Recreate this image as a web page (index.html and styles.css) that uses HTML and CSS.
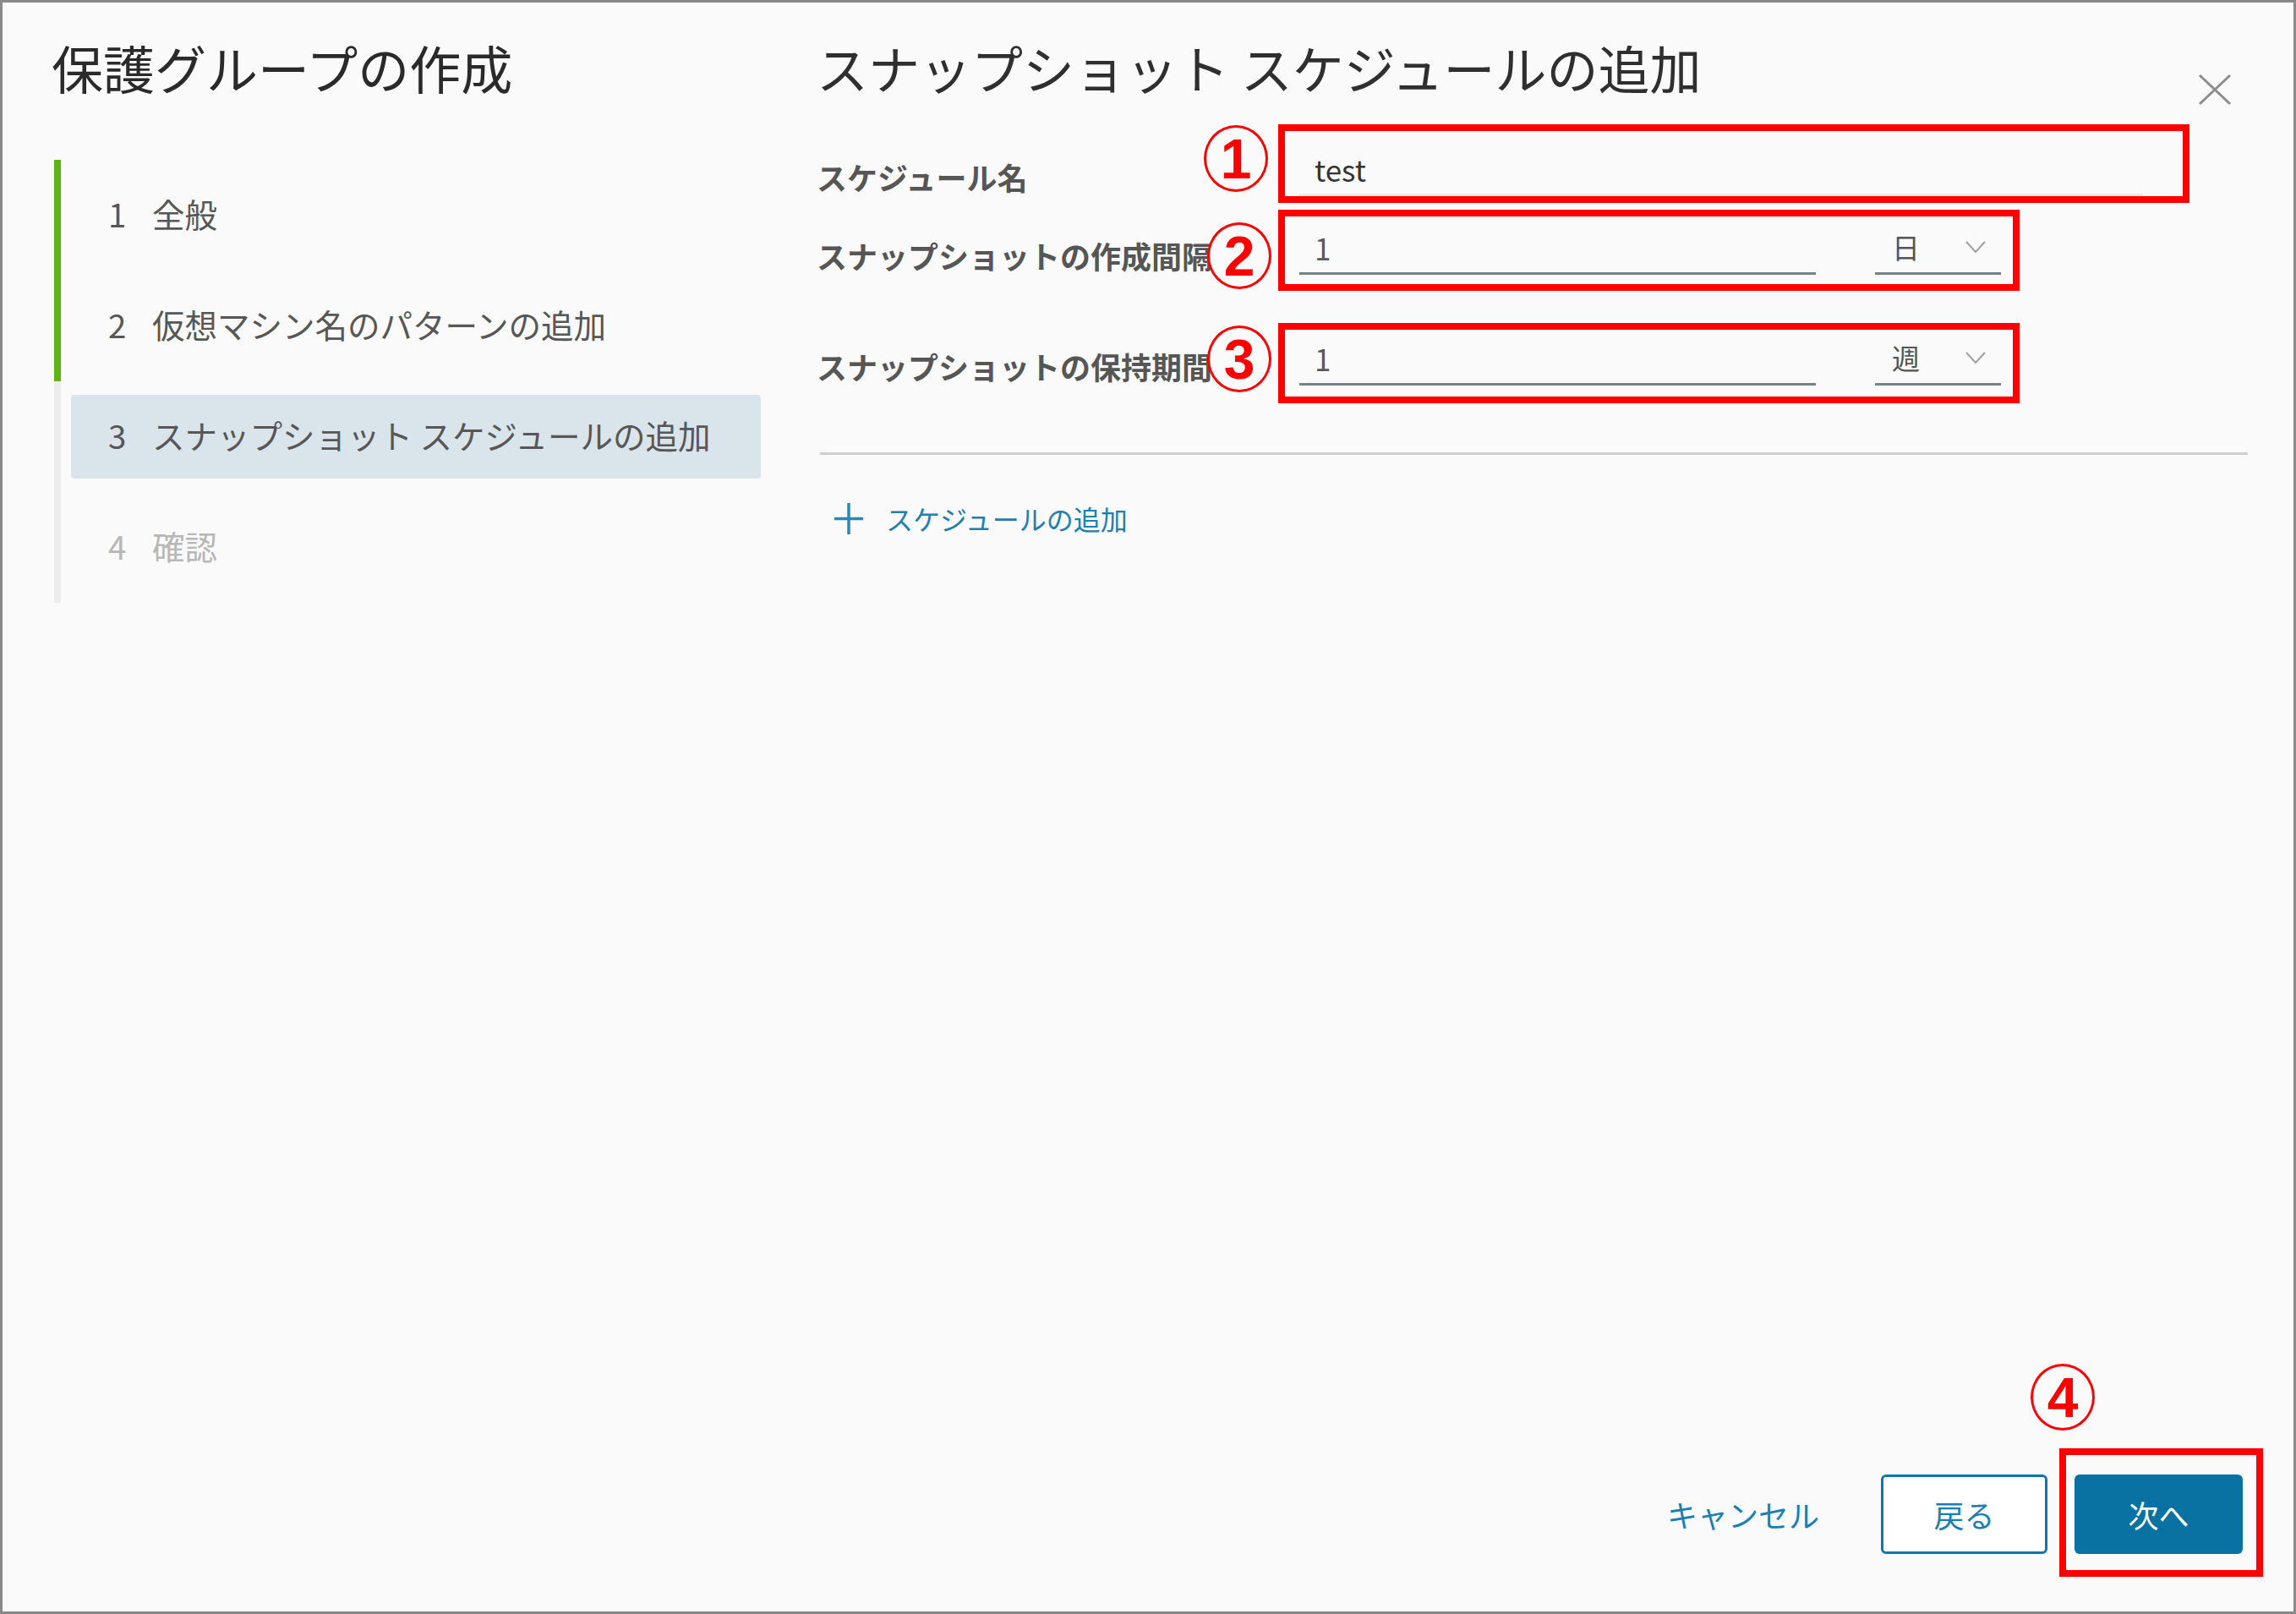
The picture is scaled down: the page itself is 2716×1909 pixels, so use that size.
FILE: index.html
```html
<!DOCTYPE html>
<html lang="ja">
<head>
    <meta charset="UTF-8">
    <title>保護グループの作成</title>
    <link rel="stylesheet" href="styles.css">
</head>
<body>
    <div class="dialog">
        <aside class="wizard-nav">
            <h1 class="wizard-title">保護グループの作成</h1>
            <ol class="steps">
                <li class="step done"><div class="step-label"><span class="step-num">1</span>全般</div></li>
                <li class="step done"><div class="step-label"><span class="step-num">2</span>仮想マシン名のパターンの追加</div></li>
                <li class="step active"><div class="step-label"><span class="step-num">3</span>スナップショット スケジュールの追加</div></li>
                <li class="step todo"><div class="step-label"><span class="step-num">4</span>確認</div></li>
            </ol>
        </aside>

        <section class="wizard-page">
            <header class="page-head">
                <h2 class="page-title">スナップショット スケジュールの追加</h2>
                <button class="close-btn" aria-label="閉じる">
                    <svg width="40" height="38" viewBox="0 0 40 38">
                        <path d="M2 2 L38 36 M38 2 L2 36" stroke="#8c8c8c" stroke-width="3" fill="none"/>
                    </svg>
                </button>
            </header>

            <form class="schedule">
                <div class="form-row">
                    <label class="form-label">スケジュール名</label>
                    <input class="field-input wide" type="text" value="test">
                </div>
                <div class="form-row">
                    <label class="form-label">スナップショットの作成間隔</label>
                    <input class="field-input" type="text" value="1">
                    <div class="select">
                        <span>日</span>
                        <svg width="24" height="15" viewBox="0 0 24 15">
                            <polyline points="1,1 12,13 23,1" stroke="#a0a0a0" stroke-width="2" fill="none"/>
                        </svg>
                    </div>
                </div>
                <div class="form-row spaced">
                    <label class="form-label">スナップショットの保持期間</label>
                    <input class="field-input" type="text" value="1">
                    <div class="select">
                        <span>週</span>
                        <svg width="24" height="15" viewBox="0 0 24 15">
                            <polyline points="1,1 12,13 23,1" stroke="#a0a0a0" stroke-width="2" fill="none"/>
                        </svg>
                    </div>
                </div>
            </form>

            <div class="divider"></div>

            <button class="add-schedule" type="button">
                <svg width="34" height="37" viewBox="0 0 34 37">
                    <path d="M17 0 V37 M0 18.5 H34" stroke="#2a87b6" stroke-width="3.5" fill="none"/>
                </svg>
                スケジュールの追加
            </button>

            <footer class="wizard-foot">
                <button class="btn btn-link" type="button">キャンセル</button>
                <button class="btn btn-outline" type="button">戻る</button>
                <button class="btn btn-primary" type="button">次へ</button>
            </footer>
        </section>

        <!-- annotation marks drawn over the dialog -->
        <div class="mark-box box-1"></div>
        <div class="mark-box box-2"></div>
        <div class="mark-box box-3"></div>
        <div class="mark-box box-4"></div>
        <span class="mark-num num-1">1</span>
        <span class="mark-num num-2">2</span>
        <span class="mark-num num-3">3</span>
        <span class="mark-num num-4">4</span>
    </div>
</body>
</html>
```

FILE: styles.css
```css
* {
    box-sizing: border-box;
}

html, body {
    margin: 0;
    height: 100%;
}

body {
    font-family: "Noto Sans CJK JP", "Noto Sans", sans-serif;
    background: #fafafa;
    color: #333;
}

.dialog {
    position: relative;
    display: flex;
    height: 100%;
    border: 3px solid #888;
    background: #fafafa;
}

/* left wizard navigation */
.wizard-nav {
    width: 963px;
    flex-shrink: 0;
    padding: 46px 0 0 58px;
}

.wizard-title {
    margin: 0;
    font-size: 61px;
    font-weight: normal;
    line-height: 62px;
    color: #2a2a2a;
}

.steps {
    list-style: none;
    margin: 78px 0 0 3px;
    padding: 0;
}

.step {
    padding: 16px 0 16px 12px;
    border-left: 8px solid #ececec;
}

.step.done {
    border-left-color: #5eb31a;
}

.step-label {
    display: flex;
    align-items: center;
    width: 816px;
    height: 99px;
    padding: 0 0 6px 44px;
    border-radius: 4px;
    font-size: 38.5px;
    color: #575757;
    white-space: nowrap;
}

.step.active .step-label {
    background: #d9e4eb;
}

.step.todo .step-label {
    color: #b7b7b7;
}

.step-num {
    width: 52px;
}

/* right page */
.wizard-page {
    flex: 1;
    display: flex;
    flex-direction: column;
    padding: 46px 54px 68px 0;
}

.page-head {
    display: flex;
    align-items: flex-start;
    height: 62px;
}

.page-title {
    margin: 0;
    font-size: 61px;
    font-weight: normal;
    line-height: 62px;
    color: #2f2f2f;
    white-space: nowrap;
}

.close-btn {
    margin: 38px 19px 0 auto;
    padding: 0;
    width: 40px;
    height: 38px;
    border: none;
    background: none;
    cursor: pointer;
}

.close-btn svg {
    display: block;
}

.schedule {
    margin-top: 58px;
}

.form-row {
    display: flex;
    align-items: center;
}

.form-row + .form-row {
    margin-top: 30px;
}

.form-row.spaced {
    margin-top: 68px;
}

.form-label {
    width: 571px;
    flex-shrink: 0;
    padding-top: 16px;
    font-size: 36px;
    line-height: 40px;
    font-weight: bold;
    color: #565656;
    white-space: nowrap;
}

.field-input {
    width: 611px;
    height: 63px;
    padding: 10px 18px;
    border: none;
    border-bottom: 3px solid #74838a;
    background: transparent;
    font-family: "Noto Sans CJK JP", "Noto Sans", sans-serif;
    font-size: 35px;
    line-height: 40px;
    color: #5a5a5a;
    outline: none;
}

.field-input.wide {
    width: 998px;
    border-bottom-color: #ebebeb;
    color: #333;
}

.select {
    display: flex;
    align-items: center;
    justify-content: space-between;
    width: 149px;
    height: 63px;
    margin-left: 70px;
    padding: 0 18px 0 20px;
    border-bottom: 3px solid #74838a;
    font-size: 33px;
    color: #555;
}

.divider {
    margin: 79px 0 0 4px;
    border-top: 3px solid #cfcfcf;
}

.add-schedule {
    align-self: flex-start;
    display: flex;
    align-items: center;
    gap: 27px;
    margin-top: 55px;
    padding: 0 0 0 21px;
    border: none;
    background: none;
    font-family: "Noto Sans CJK JP", "Noto Sans", sans-serif;
    font-size: 32px;
    line-height: 40px;
    color: #1f80b0;
    cursor: pointer;
}

.wizard-foot {
    margin-top: auto;
    display: flex;
    justify-content: flex-end;
    align-items: center;
    padding-right: 6px;
}

.btn {
    height: 94px;
    border-radius: 6px;
    font-family: "Noto Sans CJK JP", "Noto Sans", sans-serif;
    font-size: 36px;
    cursor: pointer;
}

.btn-link {
    margin-right: 73px;
    padding: 0;
    border: none;
    background: none;
    color: #1a7fb3;
}

.btn-outline {
    width: 197px;
    margin-right: 32px;
    border: 3px solid #0a78ac;
    background: #fff;
    color: #1a7fb3;
}

.btn-primary {
    width: 199px;
    border: none;
    background: #0a72a3;
    color: #fff;
}

/* red annotation marks */
.mark-box {
    position: absolute;
    border: 8px solid #ff0000;
}

.box-1 { left: 1509px; top: 144px; width: 1078px; height: 93px; }
.box-2 { left: 1509px; top: 245px; width: 877px; height: 96px; }
.box-3 { left: 1509px; top: 379px; width: 877px; height: 95px; }
.box-4 { left: 2433px; top: 1710px; width: 241px; height: 152px; }

.mark-num {
    position: absolute;
    display: flex;
    align-items: center;
    justify-content: center;
    width: 76px;
    height: 79px;
    border: 3px solid #ff0000;
    border-radius: 50%;
    background: #fafafa;
    font-family: "Liberation Sans", Arial, sans-serif;
    font-size: 66px;
    font-weight: bold;
    line-height: 1;
    color: #ff0000;
}

.num-1 { left: 1421px; top: 145px; }
.num-2 { left: 1425px; top: 260px; }
.num-3 { left: 1425px; top: 382px; }
.num-4 { left: 2399px; top: 1610px; }
```
